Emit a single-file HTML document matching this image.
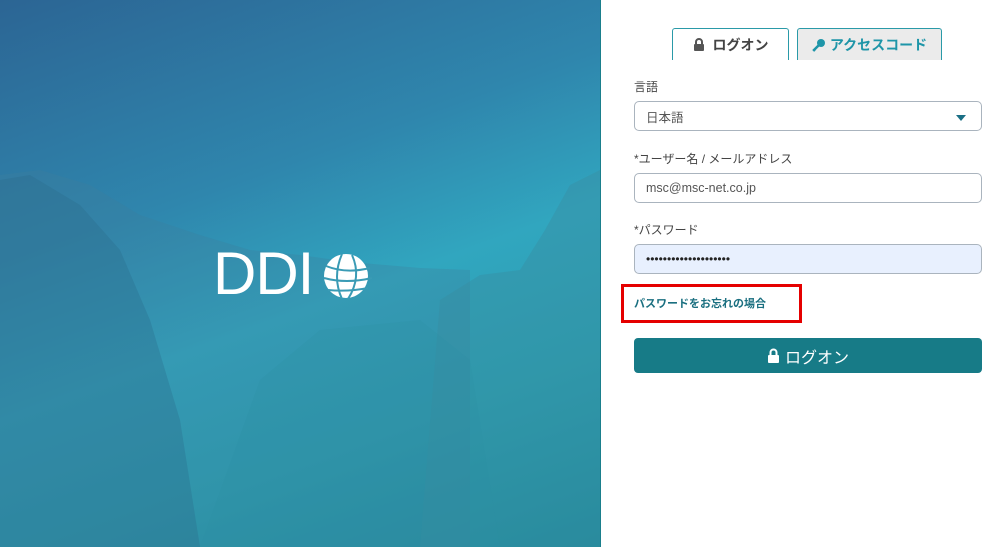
<!DOCTYPE html>
<html><head><meta charset="utf-8"><style>
*{margin:0;padding:0;box-sizing:border-box}
body{width:1005px;height:547px;overflow:hidden;position:relative;font-family:"Liberation Sans","Noto Sans CJK JP",sans-serif;background:#fff}
#left{position:absolute;left:0;top:0;width:600px;height:547px;background:linear-gradient(160deg,#2c6594 0%,#2f86ad 35%,#31a6bf 55%,#2a9eb0 75%,#1f8a9c 100%);overflow:hidden}
#right{position:absolute;left:600px;top:0;width:405px;height:547px;background:#fff;border-left:1px solid #1a7f8c}
.tab{position:absolute;top:28px;height:32px;border:1px solid #2a9aa8;border-bottom:none;border-radius:3px 3px 0 0;font-weight:bold;font-size:14px;display:flex;align-items:center;justify-content:center}
.lbl{position:absolute;left:33px;font-size:12px;color:#444}
.inp{position:absolute;left:33px;width:348px;height:30px;border:1px solid #aab4be;border-radius:5px;font-size:12.5px;color:#555;padding-left:11px;display:flex;align-items:center}
</style></head><body>
<div id="left">
<svg width="600" height="547" style="position:absolute;left:0;top:0">
<polygon points="0,175 40,170 90,185 140,215 200,235 250,250 300,255 350,262 420,268 470,270 470,547 0,547" fill="#3f7d9a" opacity=".3"/>
<polygon points="0,180 30,175 80,205 120,250 150,320 180,420 200,547 0,547" fill="#2c6c8c" opacity=".35"/>
<polygon points="440,300 480,275 520,270 545,230 570,185 600,170 600,547 420,547" fill="#3a8da0" opacity=".4"/>
<polygon points="200,547 260,380 320,330 420,320 470,360 500,547" fill="#2c8fa3" opacity=".25"/>
</svg>
<div style="position:absolute;left:213px;top:244px;color:#fff;font-size:60px;font-weight:normal;letter-spacing:-1px;line-height:60px;font-family:'Liberation Sans',sans-serif">DDI</div>
<svg style="position:absolute;left:316px;top:252px" width="62" height="50" viewBox="0 0 62 50">
<circle cx="30" cy="24" r="22" fill="#fff"/>
<g stroke="#3a9bb5" stroke-width="2" fill="none">
<path d="M10,14 Q30,22 54,16"/><path d="M8,26 Q30,32 56,26"/><path d="M12,38 Q32,40 52,36"/>
<path d="M26,2 Q16,25 26,47"/><path d="M36,3 Q46,25 32,47"/></g>
</svg>
</div>
<div id="right">
<div class="tab" style="left:71px;width:117px;background:#fff;color:#444"><svg width="12" height="13" viewBox="0 0 12 13" style="margin-right:8px"><rect x="1" y="6" width="10" height="7" rx="1" fill="#555"/><path d="M3,6V4a3,3 0 0 1 6,0V6" stroke="#555" stroke-width="2" fill="none"/></svg>ログオン</div>
<div class="tab" style="left:196px;width:145px;background:#ebebeb;color:#1e95a8"><svg width="14" height="14" viewBox="0 0 14 14" style="margin-right:4px"><circle cx="9" cy="5" r="4" fill="#1e95a8"/><path d="M7,7L2,12l1,1" stroke="#1e95a8" stroke-width="2.5" fill="none"/></svg>アクセスコード</div>
<div class="lbl" style="top:78px">言語</div>
<div class="inp" style="top:101px">日本語<span style="position:absolute;right:15px;top:13px;border-left:5px solid transparent;border-right:5px solid transparent;border-top:6px solid #1a6f85"></span></div>
<div class="lbl" style="top:150px">*ユーザー名 / メールアドレス</div>
<div class="inp" style="top:173px">msc@msc-net.co.jp</div>
<div class="lbl" style="top:221px">*パスワード</div>
<div class="inp" style="top:244px;background:#e8f0fe;color:#222;font-size:12px">••••••••••••••••••••</div>
<div style="position:absolute;left:20px;top:284px;width:181px;height:39px;border:3px solid #e50000"></div>
<div style="position:absolute;left:33px;top:295px;font-size:11px;font-weight:bold;color:#1a6f80">パスワードをお忘れの場合</div>
<div style="position:absolute;left:33px;top:338px;width:348px;height:35px;background:#177b87;border-radius:4px;color:#fff;font-size:16px;display:flex;align-items:center;justify-content:center"><svg width="13" height="15" viewBox="0 0 13 15" style="margin-right:5px"><rect x="1" y="7" width="11" height="8" rx="1" fill="#fff"/><path d="M3.5,7V4.5a3,3 0 0 1 6,0V7" stroke="#fff" stroke-width="2" fill="none"/></svg>ログオン</div>
</div>
</body></html>
